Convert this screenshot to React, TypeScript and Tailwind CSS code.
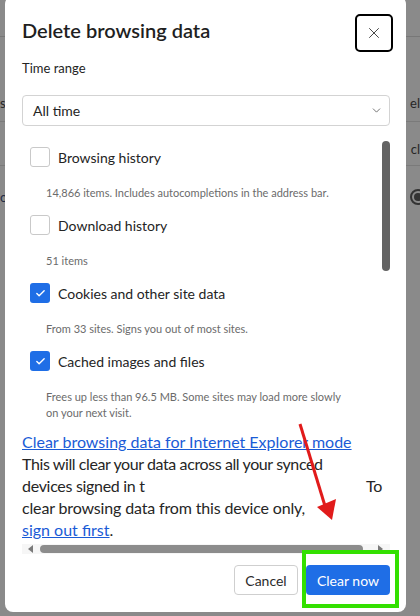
import { Check, ChevronDown, X } from 'lucide-react';

type Item = { label: string; desc: string[]; checked: boolean };

const items: Item[] = [
    { label: 'Browsing history', desc: ['14,866 items. Includes autocompletions in the address bar.'], checked: false },
    { label: 'Download history', desc: ['51 items'], checked: false },
    { label: 'Cookies and other site data', desc: ['From 33 sites. Signs you out of most sites.'], checked: true },
    {
        label: 'Cached images and files',
        desc: ['Frees up less than 96.5 MB. Some sites may load more slowly', 'on your next visit.'],
        checked: true,
    },
];

function CheckRow({ item }: { item: Item }) {
    return (
        <div className="pl-[8px] mb-[14px]">
            <div className="flex items-center h-[20px] gap-[8px]">
                {item.checked ? (
                    <span className="w-[20px] h-[20px] rounded-[3px] bg-[#1f6ee6] flex items-center justify-center">
                        <Check className="w-[11px] h-[11px] text-white" strokeWidth={3} />
                    </span>
                ) : (
                    <span className="w-[20px] h-[20px] rounded-[3px] border border-[#c9c9c9] bg-white" />
                )}
                <span className="text-[14px] text-[#242424]">{item.label}</span>
            </div>
            <div className="mt-[18px] pl-[16px] text-[11px] leading-[16px] text-[#6b6b6b]">
                {item.desc.map((d, i) => (
                    <div key={i}>{d}</div>
                ))}
            </div>
        </div>
    );
}

export default function App() {
    return (
        <div
            className="relative w-[420px] h-[616px] overflow-hidden bg-[#8a8a8a] text-[#1c1c1c]"
            style={{ fontFamily: 'Lato, "Noto Sans", sans-serif' }}
        >
            {/* Dimmed page behind the dialog */}
            <div className="flex flex-col text-[13px] leading-[20px] text-[#262626]">
                <div className="h-[37px] border-b border-[#777]" />
                <div className="h-[85px] border-b border-[#7a7a7a] flex items-start justify-between pt-[56px]">
                    <span className="ml-[0px]">s</span>
                    <span className="mr-[0px]">el</span>
                </div>
                <div className="h-[44px] border-b border-[#7a7a7a] flex items-start justify-end pt-[17px]">
                    <span className="mr-[0px]">cl</span>
                </div>
                <div className="h-[64px] flex items-start justify-between pt-[21px]">
                    <span className="ml-[0px] text-[#1f2a44]">o</span>
                    <span className="mt-[2px] w-[16px] h-[16px] rounded-full border-2 border-[#333] mr-[-6px] flex items-center justify-center">
                        <span className="w-[8px] h-[8px] rounded-full bg-[#333]" />
                    </span>
                </div>
            </div>

            {/* Dialog */}
            <div className="absolute left-[5px] top-[-4px] w-[401px] h-[616px] rounded-[8px] bg-white flex flex-col">
                <div className="flex items-start justify-between pt-[18px] pl-[17px] pr-[13px]">
                    <h1 className="mt-[2px] text-[20px] leading-[28px] font-semibold text-[#1f1f1f]">Delete browsing data</h1>
                    <button className="w-[38px] h-[38px] rounded-[5px] border-2 border-black flex items-center justify-center">
                        <X className="w-[18px] h-[18px] text-[#333]" strokeWidth={1.2} />
                    </button>
                </div>

                <div className="mt-[6px] pl-[17px] text-[13px] leading-[20px] text-[#242424]">Time range</div>

                <div className="mt-[17px] ml-[17px] mr-[16px] h-[31px] rounded-[4px] border border-[#d3d3d3] flex items-center justify-between pl-[10px] pr-[6px]">
                    <span className="text-[14px] text-[#242424]">All time</span>
                    <ChevronDown className="w-[13px] h-[13px] text-[#555]" strokeWidth={1.5} />
                </div>

                {/* Scroll area */}
                <div className="mt-[7px] ml-[17px] mr-[16px] flex flex-col">
                    <div className="flex">
                        <div className="flex-1 pt-[14px]">
                            {items.map(it => (
                                <CheckRow key={it.label} item={it} />
                            ))}
                            <div className="-mt-[4px] text-[16px] leading-[22px] text-[#262626]">
                                <div>
                                    <span className="text-[#1a5bd6] underline">Clear browsing data for Internet Explorer mode</span>
                                </div>
                                <div className="tracking-[-0.4px]">This will clear your data across all your synced</div>
                                <div className="flex justify-between tracking-[-0.3px]">
                                    <span>devices signed in t</span>
                                    <span>To</span>
                                </div>
                                <div className="tracking-[-0.15px]">clear browsing data from this device only,</div>
                                <div>
                                    <span className="text-[#1a5bd6] underline">sign out first</span>.
                                </div>
                            </div>
                        </div>
                        <div className="w-[8px] pt-[8px]">
                            <div className="h-[130px] rounded-full bg-[#636363]" />
                        </div>
                    </div>
                    <div className="mt-[3px] h-[10px] bg-[#f6f6f6] flex items-center">
                        <span className="ml-[6px] w-0 h-0 border-y-[4px] border-y-transparent border-r-[5px] border-r-[#7a7a7a]" />
                        <div className="ml-[7px] w-[323px] h-[8px] rounded-full bg-[#8c8c8c]" />
                        <span className="ml-[15px] w-0 h-0 border-y-[4px] border-y-transparent border-l-[5px] border-l-[#7a7a7a]" />
                    </div>
                </div>

                <div className="mt-[11px] pr-[16px] flex justify-end gap-[8px]">
                    <button className="h-[30px] w-[64px] rounded-[4px] border border-[#cfcfcf] bg-white text-[14px] text-[#2b2b2b]">
                        Cancel
                    </button>
                    <button className="h-[30px] w-[84px] rounded-[4px] bg-[#1f6ee6] text-[14px] text-white">Clear now</button>
                </div>
            </div>

            {/* Highlight box */}
            <div className="absolute left-[302px] top-[550px] w-[97px] h-[58px] border-[4px] border-[#33e000]" />

            {/* Red arrow */}
            <svg className="absolute left-0 top-0" width="420" height="616" viewBox="0 0 420 616">
                <line x1="300" y1="424" x2="325" y2="506" stroke="#e11b1b" strokeWidth="3" />
                <polygon points="317,507 336,499 332,520" fill="#e11b1b" />
            </svg>
        </div>
    );
}
